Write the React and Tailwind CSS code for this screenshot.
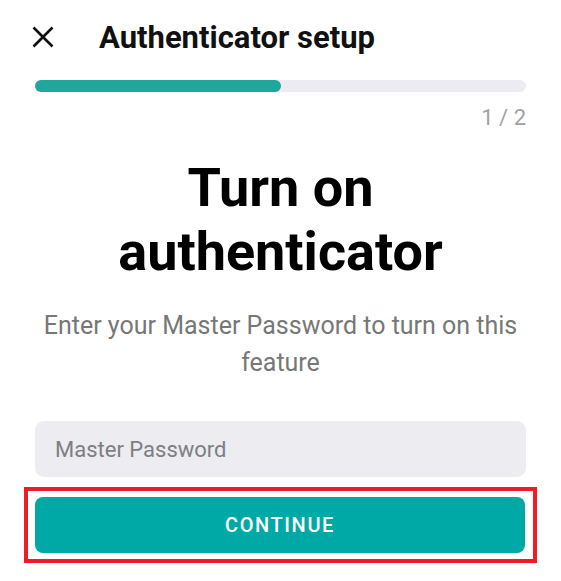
import React, { useState } from 'react'

const font = { fontFamily: 'Roboto, "Noto Sans", sans-serif' }

function CloseIcon() {
  return (
    <svg width="22" height="22" viewBox="0 0 22 22" fill="none">
      <path d="M1.5 1.5 L20.5 20.5 M20.5 1.5 L1.5 20.5" stroke="#111" strokeWidth="2.6" />
    </svg>
  )
}

export default function App() {
  const [password, setPassword] = useState('')
  const step = 1
  const total = 2

  return (
    <div className="min-h-[581px] w-[561px] bg-white" style={font}>
      <div className="flex h-[74px] items-center pl-[31px]">
        <button className="flex h-[24px] w-[24px] items-center justify-center">
          <CloseIcon />
        </button>
        <h1 className="ml-[44px] text-[31px] font-bold leading-none text-[#111]">Authenticator setup</h1>
      </div>

      <div className="px-[35px]">
        <div className="mt-[6px] h-[12px] w-full rounded-full bg-[#ebebf1]">
          <div className="h-full rounded-full bg-[#1fa79c]" style={{ width: `${(step / total) * 100.2}%` }} />
        </div>
        <div className="mt-[13px] text-right text-[22px] leading-[26px] text-[#a2a2a2]">
          {step} / {total}
        </div>

        <h2 className="mt-[25px] text-center text-[54px] font-bold leading-[64px] text-black">
          Turn on authenticator
        </h2>

        <p className="mt-[23px] text-center text-[25px] leading-[37px] text-[#777]">
          Enter your Master Password to turn on this feature
        </p>

        <input
          type="password"
          value={password}
          onChange={e => setPassword(e.target.value)}
          placeholder="Master Password"
          className="mt-[40px] block h-[56px] w-full rounded-[9px] bg-[#ececf1] px-[20px] text-[22px] text-[#333] outline-none placeholder:text-[#7e7e84]"
        />

        <div className="-mx-[11px] mt-[10px] border-4 border-[#ee1d25] pb-[6px] pl-[7px] pr-[8px] pt-[6px]">
          <button className="flex h-[56px] w-full items-center justify-center rounded-[8px] bg-[#00a9a5] text-[20px] font-medium tracking-[1.6px] text-white">
            CONTINUE
          </button>
        </div>
      </div>
    </div>
  )
}
